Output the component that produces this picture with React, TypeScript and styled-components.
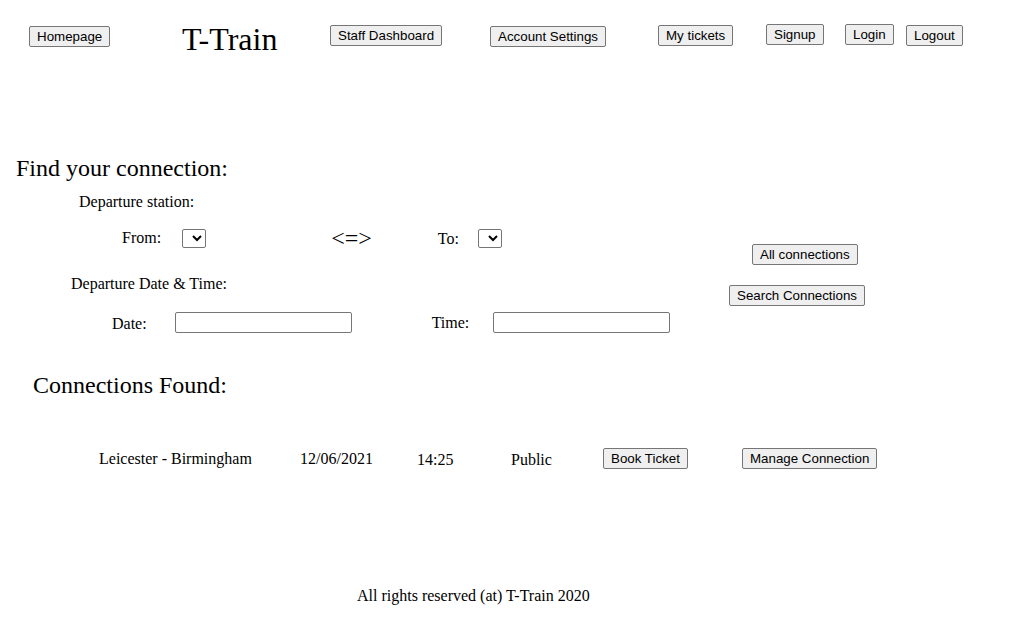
import React from "react";
import styled, { createGlobalStyle } from "styled-components";

const GlobalStyle = createGlobalStyle`
  html, body {
    margin: 0;
    padding: 0;
    background: #ffffff;
    color: #000000;
    font-family: "Liberation Serif", "Times New Roman", serif;
    font-size: 16px;
  }
`

const Page = styled.div`
  display: flex;
  flex-direction: column;
  width: 1009px;
  min-height: 634px;
  padding-top: 21px;
  box-sizing: border-box;
`

const NavBar = styled.nav`
  display: grid;
  grid-template-columns: 153px 148px 160px 168px 108px 79px 61px auto;
  align-items: start;
  justify-items: start;
  padding-left: 29px;
`

const Title = styled.h1`
  margin: 0;
  font-size: 32px;
  font-weight: normal;
  line-height: normal;
`

const Button = styled.button<{ $dy?: number }>`
  margin: ${p => p.$dy ?? 0}px 0 0 0;
  padding: 2px 7px;
  font-family: "Liberation Sans", Arial, sans-serif;
  font-size: 13.333px;
  line-height: normal;
  color: #000000;
  background-color: #efefef;
  border: 1px solid #767676;
  border-radius: 2px;
  cursor: pointer;
  white-space: nowrap;
`

const SectionTitle = styled.h2<{ $top: number; $left: number }>`
  margin: ${p => p.$top}px 0 0 ${p => p.$left}px;
  font-size: 24px;
  font-weight: normal;
  line-height: normal;
`

const SearchArea = styled.div`
  display: flex;
  margin-top: 11px;
`

const FormColumn = styled.div`
  display: flex;
  flex-direction: column;
  width: 700px;
`

const Caption = styled.div<{ $top: number; $left: number }>`
  margin: ${p => p.$top}px 0 0 ${p => p.$left}px;
  line-height: normal;
`

const FieldRow = styled.div<{ $top: number; $h: number }>`
  display: flex;
  align-items: center;
  height: ${p => p.$h}px;
  margin-top: ${p => p.$top}px;
`

const Label = styled.label<{ $left: number; $dy?: number }>`
  margin: ${p => p.$dy ?? 0}px 0 0 ${p => p.$left}px;
  line-height: normal;
`

const Swap = styled.span<{ $left: number }>`
  margin: -2px 0 0 ${p => p.$left}px;
  font-size: 24px;
  line-height: normal;
`

const Select = styled.select<{ $left: number }>`
  margin: -1px 0 0 ${p => p.$left}px;
  width: 24px;
  height: 19px;
  box-sizing: border-box;
  font-family: "Liberation Sans", Arial, sans-serif;
  font-size: 13.333px;
  background: #ffffff;
  border: 1px solid #767676;
  border-radius: 2px;
`

const TextInput = styled.input<{ $left: number; $dy?: number }>`
  margin: ${p => p.$dy ?? 0}px 0 0 ${p => p.$left}px;
  width: 177px;
  height: 21px;
  box-sizing: border-box;
  padding: 1px 2px;
  font-family: "Liberation Sans", Arial, sans-serif;
  font-size: 13.333px;
  background: #ffffff;
  border: 1px solid #767676;
  border-radius: 2px;
`

const ActionColumn = styled.div`
  display: flex;
  flex-direction: column;
  align-items: flex-start;
  gap: 20px;
  padding-top: 51px;
`

const ActionButton = styled(Button)<{ $left: number }>`
  margin-left: ${p => p.$left}px;
`

const ResultRow = styled.div`
  display: grid;
  grid-template-columns: 201px 117px 94px 92px 139px auto;
  align-items: center;
  justify-items: start;
  height: 21px;
  margin-top: 49px;
  padding-left: 99px;
`

const Cell = styled.span<{ $dy?: number }>`
  margin-top: ${p => p.$dy ?? 0}px;
  line-height: normal;
  white-space: nowrap;
`

const Footer = styled.footer`
  margin-top: 118px;
  padding-left: 357px;
  line-height: normal;
`

export default function App() {
    return (
        <>
            <GlobalStyle />
            <Page>
                <NavBar>
                    <Button $dy={5}>Homepage</Button>
                    <Title>T-Train</Title>
                    <Button $dy={4}>Staff Dashboard</Button>
                    <Button $dy={5}>Account Settings</Button>
                    <Button $dy={4}>My tickets</Button>
                    <Button $dy={3}>Signup</Button>
                    <Button $dy={3}>Login</Button>
                    <Button $dy={4}>Logout</Button>
                </NavBar>

                <SectionTitle $top={97} $left={16}>Find your connection:</SectionTitle>

                <SearchArea>
                    <FormColumn>
                        <Caption $top={0} $left={79}>Departure station:</Caption>
                        <FieldRow $top={16} $h={24}>
                            <Label $left={122} $dy={-2}>From:</Label>
                            <Select $left={21} />
                            <Swap $left={125}>&lt;=&gt;</Swap>
                            <Label $left={66}>To:</Label>
                            <Select $left={19} />
                        </FieldRow>
                        <Caption $top={24} $left={71}>Departure Date &amp; Time:</Caption>
                        <FieldRow $top={19} $h={21}>
                            <Label $left={112} $dy={2}>Date:</Label>
                            <TextInput $left={28} type="text" />
                            <Label $left={80} $dy={1}>Time:</Label>
                            <TextInput $left={24} $dy={-1} type="text" />
                        </FieldRow>
                    </FormColumn>
                    <ActionColumn>
                        <ActionButton $left={52}>All connections</ActionButton>
                        <ActionButton $left={29}>Search Connections</ActionButton>
                    </ActionColumn>
                </SearchArea>

                <SectionTitle $top={39} $left={33}>Connections Found:</SectionTitle>

                <ResultRow>
                    <Cell>Leicester - Birmingham</Cell>
                    <Cell>12/06/2021</Cell>
                    <Cell $dy={2}>14:25</Cell>
                    <Cell $dy={2}>Public</Cell>
                    <Button>Book Ticket</Button>
                    <Button $dy={-1}>Manage Connection</Button>
                </ResultRow>

                <Footer>All rights reserved (at) T-Train 2020</Footer>
            </Page>
        </>
    )
}
